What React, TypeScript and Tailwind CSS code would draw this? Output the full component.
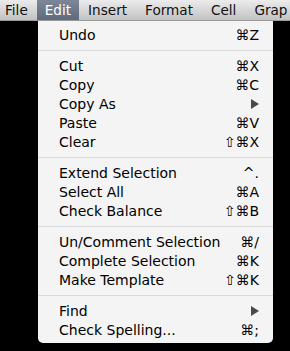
import React from "react";

type Item = { label: string; sc?: string; arrow?: boolean };

const groups: Item[][] = [
  [{ label: "Undo", sc: "⌘Z" }],
  [
    { label: "Cut", sc: "⌘X" },
    { label: "Copy", sc: "⌘C" },
    { label: "Copy As", arrow: true },
    { label: "Paste", sc: "⌘V" },
    { label: "Clear", sc: "⇧⌘X" },
  ],
  [
    { label: "Extend Selection", sc: "^." },
    { label: "Select All", sc: "⌘A" },
    { label: "Check Balance", sc: "⇧⌘B" },
  ],
  [
    { label: "Un/Comment Selection", sc: "⌘/" },
    { label: "Complete Selection", sc: "⌘K" },
    { label: "Make Template", sc: "⇧⌘K" },
  ],
  [
    { label: "Find", arrow: true },
    { label: "Check Spelling...", sc: "⌘;" },
  ],
];

const menus = ["File", "Edit", "Insert", "Format", "Cell", "Grap"];

export default function App() {
  return (
    <div
      className="w-[290px] h-[351px] bg-black overflow-hidden flex flex-col"
      style={{ fontFamily: '"DejaVu Sans", "Noto Sans", sans-serif' }}
    >
      <div className="h-[21px] pl-[5px] flex items-stretch bg-gradient-to-b from-[#ececec] to-[#c2c2c2] border-b border-[#9a9a9a] shrink-0 whitespace-nowrap">
        {menus.map((m, i) => (
          <div
            key={m}
            className={
              m === "Edit"
                ? "px-[8px] flex items-center text-[13.6px] text-white bg-gradient-to-b from-[#7d8797] to-[#5f6a7c]"
                : i === 0
                ? "pr-[9px] flex items-center text-[13.6px] text-[#111]"
                : "px-[9px] flex items-center text-[13.6px] text-[#111]"
            }
          >
            {m}
          </div>
        ))}
      </div>
      <div className="ml-[38px] w-[235px] bg-[#f4f4f4] rounded-b-[5px] pt-[4px] pb-[4px] text-[14px] text-black">
        {groups.map((g, gi) => (
          <div key={gi}>
            {gi > 0 && (
              <div className="h-[12px] flex items-center">
                <div className="w-full h-px bg-[#d9d9d9]" />
              </div>
            )}
            {g.map((it) => (
              <div
                key={it.label}
                className="h-[19px] flex items-center justify-between pl-[21px] pr-[14px] leading-none"
              >
                <span>{it.label}</span>
                {it.arrow ? (
                  <svg width="8" height="10" viewBox="0 0 8 10">
                    <path d="M0 0 L8 5 L0 10 Z" fill="#4a4a4a" />
                  </svg>
                ) : (
                  <span>{it.sc}</span>
                )}
              </div>
            ))}
          </div>
        ))}
      </div>
    </div>
  );
}
